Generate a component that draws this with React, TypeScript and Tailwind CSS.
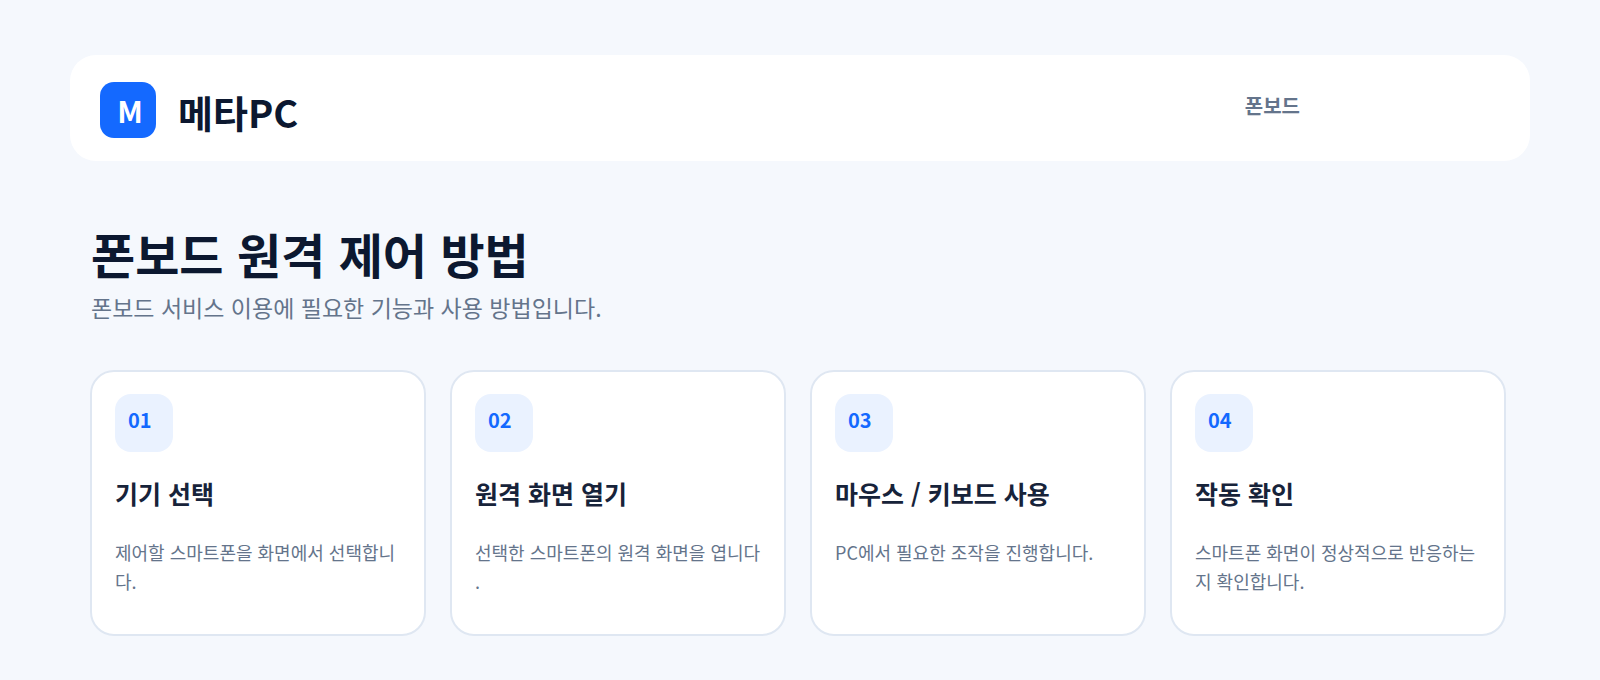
import React from "react"

const steps = [
    { no: "01", title: "기기 선택", desc: "제어할 스마트폰을 화면에서 선택합니다." },
    { no: "02", title: "원격 화면 열기", desc: "선택한 스마트폰의 원격 화면을 엽니다." },
    { no: "03", title: "마우스 / 키보드 사용", desc: "PC에서 필요한 조작을 진행합니다." },
    { no: "04", title: "작동 확인", desc: "스마트폰 화면이 정상적으로 반응하는지 확인합니다." },
]

const Header: React.FC = () => (
    <header className="flex items-center justify-between rounded-[26px] bg-white pt-[27px] pb-[23px] pl-[30px] pr-[230px]">
        <a href="#" className="flex items-center gap-[22px]">
            <span className="flex size-14 items-center justify-center rounded-[14px] bg-[#1469ff] pl-1 text-[30px] leading-8 font-bold text-white">
                M
            </span>
            <span className="pt-1 text-[38px] leading-12 font-bold text-[#0c1830]">메타PC</span>
        </a>
        <nav className="pb-2">
            <a href="#phoneboard" className="text-xl leading-7 font-bold text-[#64748b]">폰보드</a>
        </nav>
    </header>
)

const StepCard: React.FC<{ no: string; title: string; desc: string }> = ({ no, title, desc }) => (
    <li className="rounded-3xl border-2 border-[#dfe7f2] bg-white px-[23px] pt-[22px] pb-[38px]">
        <div className="flex size-[58px] items-start rounded-2xl bg-[#eaf2ff] px-[13px] pt-3 text-xl leading-7 font-bold text-[#1469ff]">
            {no}
        </div>
        <h2 className="mt-6 text-[25px] leading-[34px] font-bold text-[#17233a]">{title}</h2>
        <p className="mt-7 min-h-[58px] break-all text-lg leading-[29px] text-[#64748b] [line-break:anywhere]">
            {desc}
        </p>
    </li>
)

export default function App() {
    return (
        <div
            lang="ko"
            className="min-h-screen bg-[#f5f8fd] px-[70px] pt-[55px] pb-11 font-['Noto_Sans_CJK_KR',sans-serif]"
        >
            <Header />
            <main id="phoneboard" className="pt-[60px] pl-5 pr-6">
                <div className="pl-px">
                    <h1 className="text-5xl leading-16 font-bold text-[#0c1830]">폰보드 원격 제어 방법</h1>
                    <p className="mt-1 text-[23px] leading-9 text-[#64748b]">
                        폰보드 서비스 이용에 필요한 기능과 사용 방법입니다.
                    </p>
                </div>
                <ul className="mt-[45px] grid grid-cols-4 gap-6">
                    {steps.map((step) => (
                        <StepCard key={step.no} {...step} />
                    ))}
                </ul>
            </main>
        </div>
    )
}
